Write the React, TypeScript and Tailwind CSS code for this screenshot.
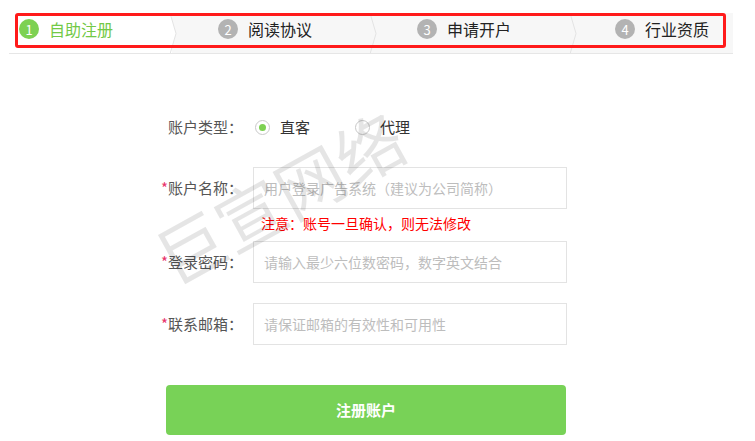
import React from "react";

const FONT = { fontFamily: '"Microsoft YaHei", "Noto Sans CJK SC", "Noto Sans", sans-serif' };

type Step = { no: number; label: string; width: string; pad: string; active?: boolean };

const STEPS: Step[] = [
  { no: 1, label: "自助注册", width: "w-[163px]", pad: "pl-[10px]", active: true },
  { no: 2, label: "阅读协议", width: "w-[200px]", pad: "pl-[46px]" },
  { no: 3, label: "申请开户", width: "w-[200px]", pad: "pl-[45px]" },
  { no: 4, label: "行业资质", width: "w-[161px]", pad: "pl-[43px]" },
];

function Chevron({ fill }: { fill: string }) {
  // arrow tip sits on the right edge of each step
  return (
    <svg
      aria-hidden
      className="pointer-events-none absolute top-0 right-[-6px] z-10 h-[41px] w-[8px]"
      viewBox="0 0 8 41"
    >
      <polygon points="0,0 6,20.5 0,41" fill={fill} />
      <polyline points="0,0 6,20.5 0,41" fill="none" stroke="#e3e3e3" strokeWidth="1" />
    </svg>
  );
}

function Steps() {
  return (
    <div className="relative mt-[13px] ml-[9px] flex h-[41px] w-[724px] border-b border-[#e6e6e6] bg-[#f7f7f7]">
      {STEPS.map((s, i) => (
        <div
          key={s.no}
          className={`relative flex h-full items-start pt-[6px] ${s.width} ${s.pad} ${s.active ? "bg-white" : ""}`}
        >
          <span
            className={`flex h-[20px] w-[20px] items-center justify-center rounded-full text-[13px] leading-none text-white ${
              s.active ? "bg-[#7dd152]" : "bg-[#b3b3b3]"
            }`}
          >
            {s.no}
          </span>
          <span
            className={`ml-[10px] text-[16px] leading-[20px] ${s.active ? "text-[#72c946]" : "text-[#222]"}`}
          >
            {s.label}
          </span>
          {i < STEPS.length - 1 ? <Chevron fill={s.active ? "#ffffff" : "#f7f7f7"} /> : null}
        </div>
      ))}
      <div className="pointer-events-none absolute top-0 left-[6px] z-20 h-[35px] w-[711px] rounded-[3px] border-[3px] border-[#ff1a1a]" />
    </div>
  );
}

function Label({ text, required }: { text: string; required?: boolean }) {
  return (
    <div className="ml-[150px] w-[93px] shrink-0 text-right text-[15px] text-[#555]">
      {required ? <span className="text-[#e8336b]">*</span> : null}
      {text}
    </div>
  );
}

function Field({ label, placeholder, type = "text", className = "" }: { label: string; placeholder: string; type?: string; className?: string }) {
  return (
    <div className={`flex items-center ${className}`}>
      <Label text={label} required />
      <input
        type={type}
        placeholder={placeholder}
        className="ml-[10px] h-[42px] w-[314px] border border-[#e3e3e3] bg-white px-[10px] text-[14px] text-[#333] outline-none placeholder:text-[#bdbdbd]"
      />
    </div>
  );
}

function Radio({ checked, label }: { checked?: boolean; label: string }) {
  return (
    <label className="flex items-center">
      <span className="flex h-[15px] w-[15px] items-center justify-center rounded-full border border-[#c9c9c9] bg-white">
        {checked ? <span className="h-[7px] w-[7px] rounded-full bg-[#7dd152]" /> : null}
      </span>
      <span className="ml-[10px] text-[15px] text-[#333]">{label}</span>
    </label>
  );
}

export default function App() {
  return (
    <div className="relative h-[441px] w-[755px] overflow-hidden bg-white" style={FONT}>
      <Steps />

      <div className="relative">
        <div className="mt-[58px] flex h-[30px] items-center">
          <Label text="账户类型：" />
          <div className="ml-[12px] flex items-center gap-[45px]">
            <Radio checked label="直客" />
            <Radio label="代理" />
          </div>
        </div>

        <Field className="mt-[25px]" label="账户名称：" placeholder="用户登录广告系统（建议为公司简称）" />
        <div className="mt-[4px] ml-[261px] h-[20px] text-[14px] leading-[20px] text-[#ff0000]">
          注意：账号一旦确认，则无法修改
        </div>
        <Field className="mt-[8px]" label="登录密码：" type="password" placeholder="请输入最少六位数密码，数字英文结合" />
        <Field className="mt-[20px]" label="联系邮箱：" placeholder="请保证邮箱的有效性和可用性" />

        <button className="mt-[40px] ml-[166px] flex h-[50px] w-[400px] items-center justify-center rounded-[4px] bg-[#78d257] text-[15px] font-bold text-white">
          注册账户
        </button>
      </div>

      {/* watermark sits over the form */}
      <div
        aria-hidden
        className="pointer-events-none absolute top-[158px] left-[134px] z-30 flex h-[76px] w-[290px] -rotate-[29deg] items-center justify-center text-[68px] leading-none whitespace-nowrap text-black/10"
      >
        巨宣网络
      </div>
    </div>
  );
}
